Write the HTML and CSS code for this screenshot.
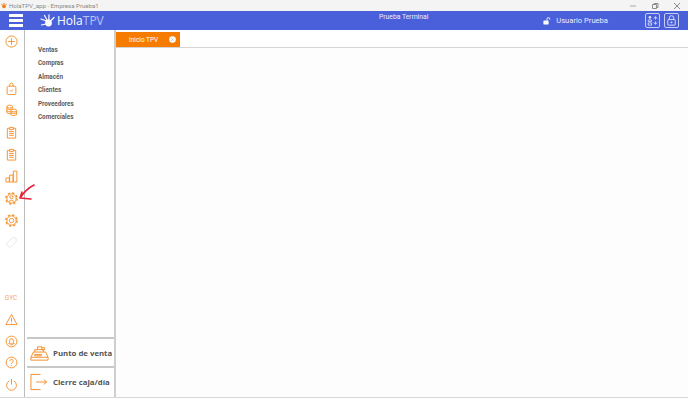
FILE: index.html
```html
<!DOCTYPE html>
<html lang="en">
<head>
    <meta charset="UTF-8">
    <meta name="viewport" content="width=device-width, initial-scale=1.0">
    <title>HolaTPV</title>
    <link rel="stylesheet" href="styles.css">
</head>
<body>
    <div class="app">
        <div class="titlebar">
            <div class="titlebar-name">
                <svg class="app-icon" viewBox="0 0 8 8"><circle cx="4" cy="5" r="2.6" fill="#f08020"/><circle cx="1.2" cy="2.4" r="0.8" fill="#f08020"/><circle cx="4" cy="1.2" r="0.8" fill="#f08020"/><circle cx="6.8" cy="2.4" r="0.8" fill="#f08020"/></svg>
                <span>HolaTPV_app - Empresa Prueba1</span>
            </div>
            <div class="window-btns">
                <svg viewBox="0 0 8 8"><path d="M1 4h6" stroke="#a8a8a8" fill="none"/></svg>
                <svg viewBox="0 0 8 8"><path d="M1.5 2.5h4v4h-4zM3 2.5v-1h4v4h-1" stroke="#8c8c8c" fill="none"/></svg>
                <svg viewBox="0 0 8 8"><path d="M1 1l6 6M7 1l-6 6" stroke="#8c8c8c" fill="none"/></svg>
            </div>
        </div>

        <header class="topbar">
            <div class="menu-btn"><span></span><span></span><span></span></div>
            <div class="logo">
                <svg class="logo-hand" viewBox="0 0 16 14">
                    <circle cx="8.5" cy="9" r="3.4" fill="#fff"/>
                    <path d="M6.5 7L1 5M7 6L4.5 1.5M8.8 6L9 .8M10.5 7L14 3.5M6 10L1.5 11" stroke="#fff" stroke-width="1.2" stroke-linecap="round" fill="none"/>
                </svg>
                <span class="logo-text">Hola<span class="logo-light">TPV</span></span>
            </div>
            <div class="terminal">Prueba Terminal</div>
            <div class="user">
                <svg class="user-lock" viewBox="0 0 10 10"><rect x="0.5" y="4.5" width="6.5" height="5" rx="0.6" fill="#fff"/><path d="M5 4.5V2.4a1.7 1.7 0 0 1 3.4 0V3.4" stroke="#fff" stroke-width="1.1" fill="none"/></svg>
                <span>Usuario Prueba</span>
            </div>
            <div class="top-btns">
                <div class="top-btn">
                    <svg viewBox="0 0 14 14"><circle cx="4.2" cy="3.6" r="1.4" fill="#dfe4fa"/><path d="M2.4 8V6.6q1.8-1.2 3.6 0V8zM8.4 5l1.8-2.2L12 5M10.2 3v3M8.4 9l1.8 2.2L12 9M10.2 11V8M2.4 12h3.6V9.6H2.4z" stroke="#dfe4fa" stroke-width="0.9" fill="none"/></svg>
                </div>
                <div class="top-btn">
                    <svg viewBox="0 0 14 14"><rect x="3" y="6" width="8" height="6" rx="0.6" stroke="#dfe4fa" fill="none"/><path d="M4.6 6V4.2a2.4 2.4 0 0 1 4.8 0V6" stroke="#dfe4fa" fill="none"/><circle cx="7" cy="9" r="1" fill="#dfe4fa"/></svg>
                </div>
            </div>
        </header>

        <div class="workspace">
            <nav class="rail">
                <div class="rail-slot">
                    <svg viewBox="0 0 14 14"><circle cx="7" cy="7" r="6"/><path d="M7 3.5v7M3.5 7h7"/></svg>
                </div>
                <div class="rail-group">
                    <div class="rail-slot">
                        <svg viewBox="0 0 14 14"><path d="M3.5 4.5h7q1.2 0 1.2 1.5v6q0 1.5-1.5 1.5H3.8q-1.500 0-1.500-1.500V6q0-1.500 1.200-1.500zM5.200 4.500V3a1.800 1.800 0 0 1 3.600 0v1.500M5.500 9l1.200 1.200 2-2.200"/></svg>
                    </div>
                    <div class="rail-slot">
                        <svg viewBox="0 0 14 14"><ellipse cx="5" cy="2.8" rx="3" ry="1.6"/><path d="M2 2.8v6.600q2 1.600 4.500 1M8 4.500V2.800M2 5.100q3 1.800 6 0M2 7.500q2 1.300 4.500.8"/><ellipse cx="9.5" cy="7" rx="3" ry="1.5"/><path d="M6.500 7v4.600q3 2 6 0V7M6.500 9.400q3 1.700 6 0"/></svg>
                    </div>
                    <div class="rail-slot">
                        <svg viewBox="0 0 14 14"><path d="M5 2.500H2.500v10.500h9V2.500H9M5 1.500h4v2.400H5zM4.500 6h5M4.500 8h5M4.500 10h5"/></svg>
                    </div>
                    <div class="rail-slot">
                        <svg viewBox="0 0 14 14"><path d="M5 2.500H2.500v10.500h9V2.500H9M5 1.500h4v2.400H5zM4.500 6h5M4.500 8h5M4.500 10h5"/></svg>
                    </div>
                    <div class="rail-slot">
                        <svg viewBox="0 0 14 14"><path d="M1 8.500h3.600v4.500H1zM5 5.500h3.600v7.500H5zM9 1.200h3.800V13H9z"/></svg>
                    </div>
                    <div class="rail-slot">
                        <svg viewBox="0 0 14 14"><circle class="gear-teeth" cx="7" cy="7" r="6"/><circle cx="7" cy="7" r="5"/><circle cx="7" cy="5.6" r="1.7"/><path d="M3.800 10.400q3.200-3.200 6.400 0"/></svg>
                    </div>
                    <div class="rail-slot">
                        <svg viewBox="0 0 14 14"><circle class="gear-teeth" cx="7" cy="7" r="6"/><circle cx="7" cy="7" r="5"/><circle cx="7" cy="7" r="2.4"/></svg>
                    </div>
                    <div class="rail-slot rail-faded">
                        <svg viewBox="0 0 14 14"><path d="M2 8l6-6h4v4l-6 6a1 1 0 0 1-1.400 0L2 9.400a1 1 0 0 1 0-1.400z"/></svg>
                    </div>
                </div>
                <div class="rail-bottom">
                    <div class="rail-slot rail-text">GYC</div>
                    <div class="rail-slot">
                        <svg viewBox="0 0 14 14"><path d="M7 1.500L13 12.500H1zM7 5.500v4M7 10.500v1"/></svg>
                    </div>
                    <div class="rail-slot">
                        <svg viewBox="0 0 14 14"><circle cx="7" cy="7" r="5.8"/><path d="M4 9.500h6L9 8V6a2 2 0 0 0-4 0v2zM6 10.500h2"/></svg>
                    </div>
                    <div class="rail-slot">
                        <svg viewBox="0 0 14 14"><circle cx="7" cy="7" r="5.8"/><path d="M5.200 5.500a1.800 1.800 0 1 1 2.600 1.600Q7 7.600 7 8.600M7 9.600v1"/></svg>
                    </div>
                    <div class="rail-slot">
                        <svg viewBox="0 0 14 14"><path d="M4.500 3.200a5.300 5.300 0 1 0 5 0M7 1v6"/></svg>
                    </div>
                </div>
            </nav>

            <aside class="sidemenu">
                <ul class="sidemenu-list">
                    <li>Ventas</li>
                    <li>Compras</li>
                    <li>Almacén</li>
                    <li>Clientes</li>
                    <li>Proveedores</li>
                    <li>Comerciales</li>
                </ul>
                <div class="quick">
                    <div class="quick-item">
                        <svg viewBox="0 0 20 18"><path d="M1 16.500h18v-3L16.500 8h-13L1 13.500zM1 13.500h18M5 8V5.500h9V8M8 5.500V2.500h4.500v3M12.500 3.500h3v2h-3M4.500 10.500h8M4.500 12h8"/></svg>
                        <span>Punto de venta</span>
                    </div>
                    <div class="quick-item">
                        <svg viewBox="0 0 20 18"><path d="M11 1H1v16h10M6.500 9h11M14.500 6.500L17.500 9l-3 2.500"/></svg>
                        <span>Cierre caja/día</span>
                    </div>
                </div>
            </aside>

            <main class="content">
                <div class="tabs">
                    <div class="tab">
                        <span>Inicio TPV</span>
                        <svg class="tab-close" viewBox="0 0 7 7"><circle cx="3.5" cy="3.5" r="3.3" fill="#fff"/><path d="M2.200 2.200l2.600 2.600M4.800 2.200L2.200 4.800" stroke="#b9b9b9" stroke-width="0.7"/></svg>
                    </div>
                </div>
            </main>

            <!-- red arrow drawn over the rail -->
            <svg class="arrow" viewBox="0 0 18 18"><path d="M16 2C10 5 6 9 2 15M4 9L2 15L13 16" stroke="#e8203a" stroke-width="1.6" fill="none" stroke-linecap="round" stroke-linejoin="round"/></svg>
        </div>
    </div>
</body>
</html>
```

FILE: styles.css
```css
* {
    margin: 0;
    padding: 0;
    box-sizing: border-box;
}

body {
    font-family: Roboto, Arial, sans-serif;
    background: #fff;
}

.app {
    width: 688px;
    height: 398px;
    display: flex;
    flex-direction: column;
    border-bottom: 1px solid #d6d6d6;
}

/* Window title */
.titlebar {
    height: 11px;
    background: #f4f4f4;
    display: flex;
    justify-content: space-between;
    align-items: center;
}

.titlebar-name {
    display: flex;
    align-items: center;
    gap: 2px;
    padding-left: 1px;
    font-size: 6.1px;
    color: #8a8a8a;
}

.app-icon {
    width: 6px;
    height: 7px;
}

.window-btns {
    display: flex;
    gap: 14px;
    padding-right: 7px;
}

.window-btns svg {
    width: 8px;
    height: 8px;
}

/* Blue header */
.topbar {
    height: 19px;
    background: #4a60db;
    display: flex;
    align-items: center;
    position: relative;
    color: #fff;
}

.menu-btn {
    width: 14px;
    margin-left: 9px;
    display: flex;
    flex-direction: column;
    gap: 2.5px;
}

.menu-btn span {
    height: 2.5px;
    background: #fff;
}

.logo {
    display: flex;
    align-items: center;
    margin-left: 17px;
}

.logo-hand {
    width: 16px;
    height: 14px;
}

.logo-text {
    font-family: "Open Sans", sans-serif;
    font-size: 12px;
    margin-left: 1px;
}

.logo-light {
    color: #b9c3f3;
}

.terminal {
    position: absolute;
    left: 379px;
    top: 2px;
    font-size: 6.8px;
    color: #e9ecfb;
}

.user {
    margin-left: auto;
    display: flex;
    align-items: center;
    gap: 5px;
    font-size: 7.6px;
    color: #e9ecfb;
}

.user-lock {
    width: 8px;
    height: 8px;
}

.top-btns {
    display: flex;
    gap: 4px;
    margin: 0 9px 0 37px;
}

.top-btn {
    width: 15px;
    height: 15px;
    border: 1px solid #c5cdf5;
    border-radius: 2px;
    display: flex;
}

.top-btn svg {
    width: 13px;
    height: 13px;
}

/* Main area */
.workspace {
    flex: 1;
    display: flex;
    position: relative;
    min-height: 0;
}

.rail {
    width: 25px;
    border-right: 1px solid #bdbdbd;
    display: flex;
    flex-direction: column;
    align-items: flex-start;
    padding-bottom: 2px;
}

.rail-group {
    margin-top: 25px;
}

.rail-bottom {
    margin-top: auto;
}

.rail-slot {
    width: 22px;
    height: 22px;
    display: flex;
    align-items: center;
    justify-content: center;
}

.rail-bottom .rail-slot {
    height: 21.5px;
}

.rail-slot svg {
    width: 13px;
    height: 13px;
    fill: none;
    stroke: #f59331;
    stroke-width: 1.05;
}

.rail-slot .gear-teeth {
    stroke-width: 1.6;
    stroke-dasharray: 2.4 2.31;
}

.rail-faded svg {
    stroke: #e6e6e6;
}

.rail-text {
    font-size: 6.5px;
    color: #f5a55c;
}

.sidemenu {
    width: 91px;
    border-right: 2px solid #cfcfcf;
    display: flex;
    flex-direction: column;
    justify-content: space-between;
}

.sidemenu-list {
    list-style: none;
    padding: 14px 0 0 13px;
}

.sidemenu-list li {
    height: 13.4px;
    line-height: 13.4px;
    font-size: 6.3px;
    font-weight: 700;
    color: #5c5c5c;
}

.quick {
    padding: 0 0 2px 2px;
}

.quick-item {
    height: 29px;
    border-top: 2px solid #c8c8c8;
    display: flex;
    align-items: center;
    gap: 4px;
    padding-left: 3px;
    font-family: "Open Sans", sans-serif;
    font-size: 7.8px;
    font-weight: 700;
    color: #555;
    white-space: nowrap;
}

.quick-item svg {
    width: 19px;
    height: 18px;
    fill: none;
    stroke: #f28c28;
    stroke-width: 1;
}

.content {
    flex: 1;
    background: #fdfdfd;
}

.tabs {
    height: 18px;
    padding-top: 2px;
    background: #fff;
    border-bottom: 1px solid #d4d4d4;
}

.tab {
    width: 64px;
    height: 15px;
    background: #f57c00;
    color: #fff;
    font-size: 6.5px;
    display: flex;
    align-items: center;
    justify-content: space-between;
    padding: 0 4px 0 13px;
}

.tab-close {
    width: 7px;
    height: 7px;
}

.arrow {
    position: absolute;
    left: 18px;
    top: 153px;
    width: 18px;
    height: 18px;
}
```
